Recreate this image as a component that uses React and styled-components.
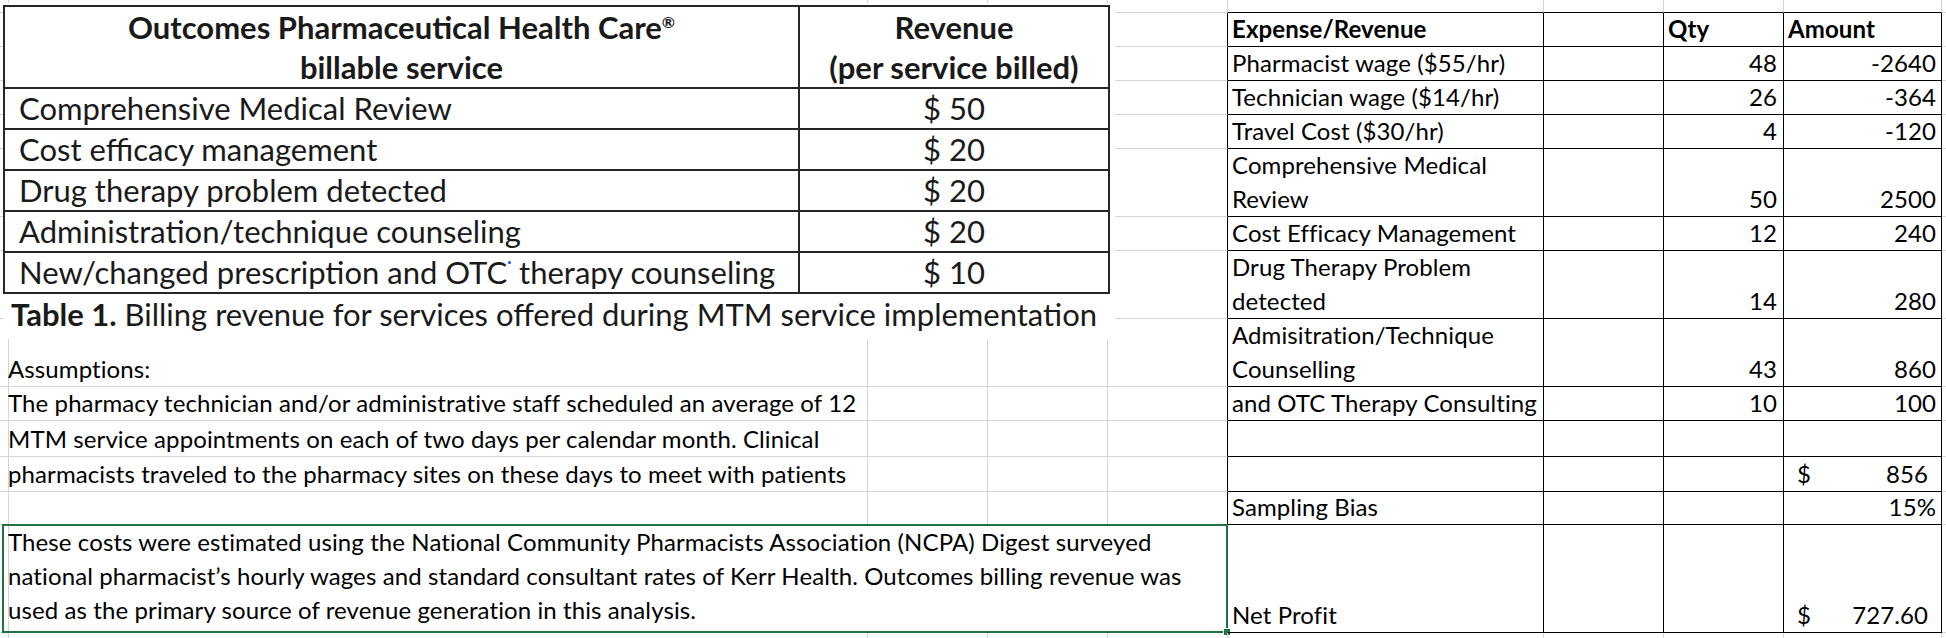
import styled, { createGlobalStyle } from 'styled-components';

const GlobalStyle = createGlobalStyle`
  html, body {
    margin: 0;
    padding: 0;
    background: #ffffff;
  }
  body {
    font-family: Lato, 'Open Sans', sans-serif;
    color: #000;
    overflow: hidden;
  }
`;

const COL_WIDTHS = [3, 865, 120, 120, 120, 316, 120, 120, 158, 4];
const ROW_HEIGHTS = [13, 34, 34, 34, 34, 68, 34, 68, 68, 34, 36, 35, 33, 108, 10];

const services = [
  { name: 'Comprehensive Medical Review', price: 50 },
  { name: 'Cost efficacy management', price: 20 },
  { name: 'Drug therapy problem detected', price: 20 },
  { name: 'Administration/technique counseling', price: 20 },
  { name: 'New/changed prescription and OTC therapy counseling', price: 10, dot: true },
];

const ledger = [
  { label: ['Expense/Revenue'], qty: 'Qty', amount: 'Amount', head: true },
  { label: ['Pharmacist wage ($55/hr)'], qty: '48', amount: '-2640' },
  { label: ['Technician wage ($14/hr)'], qty: '26', amount: '-364' },
  { label: ['Travel Cost ($30/hr)'], qty: '4', amount: '-120' },
  { label: ['Comprehensive Medical', 'Review'], qty: '50', amount: '2500' },
  { label: ['Cost Efficacy Management'], qty: '12', amount: '240' },
  { label: ['Drug Therapy Problem', 'detected'], qty: '14', amount: '280' },
  { label: ['Admisitration/Technique', 'Counselling'], qty: '43', amount: '860' },
  { label: ['and OTC Therapy Consulting'], qty: '10', amount: '100' },
  {},
  { amount: '856', currency: true },
  { label: ['Sampling Bias'], amount: '15%' },
  { label: ['Net Profit'], amount: '727.60', currency: true },
];

const leftNotes = {
  8: 'Assumptions:',
  9: 'The pharmacy technician and/or administrative staff scheduled an average of 12',
  10: 'MTM service appointments on each of two days per calendar month. Clinical',
  11: 'pharmacists traveled to the pharmacy sites on these days to meet with patients',
};

const costNote = [
  'These costs were estimated using the National Community Pharmacists Association (NCPA) Digest surveyed',
  'national pharmacist\u2019s hourly wages and standard consultant rates of Kerr Health. Outcomes billing revenue was',
  'used as the primary source of revenue generation in this analysis.',
];

export default function App() {
  function renderCells() {
    const cells = [];
    ROW_HEIGHTS.forEach((_, r) => {
      COL_WIDTHS.forEach((__, c) => {
        if (r === 13 && c >= 2 && c <= 4) return;

        const inTable = r >= 1 && r <= 13;
        const rightDark = inTable && c >= 4 && c <= 8;
        const bottomDark = r <= 13 && c >= 5 && c <= 8;
        const row = inTable ? ledger[r - 1] : null;

        let content = null;
        let align = 'left';
        let padL = 4;
        let padR = 4;

        if (c === 1 && leftNotes[r]) {
          content = <Line>{leftNotes[r]}</Line>;
          padL = 5;
        }
        if (row && c === 5 && row.label) {
          content = row.label.map((l, i) => <Line key={i}>{l}</Line>);
        }
        if (row && c === 7 && row.qty) {
          content = <Line>{row.qty}</Line>;
          if (!row.head) {
            align = 'right';
            padR = 6;
          }
        }
        if (row && c === 8 && row.amount) {
          if (row.currency) {
            content = (
              <Accounting>
                <span>$</span>
                <span>{row.amount}</span>
              </Accounting>
            );
            padL = 13;
            padR = 13;
          } else {
            content = <Line>{row.amount}</Line>;
            if (!row.head) {
              align = 'right';
              padR = 5;
            }
          }
        }

        if (r === 13 && c === 1) {
          cells.push(
            <Cell key={`${r}-${c}`} style={{ gridColumn: '2 / span 4' }} $top $padL={5} $padR={4}>
              {costNote.map((l, i) => <Line key={i}>{l}</Line>)}
              <Selection>
                <Handle />
              </Selection>
            </Cell>
          );
          return;
        }

        cells.push(
          <Cell
            key={`${r}-${c}`}
            $rightDark={rightDark}
            $bottomDark={bottomDark}
            $align={align}
            $padL={padL}
            $padR={padR}
            $bold={row && row.head}
          >
            {content}
          </Cell>
        );
      });
    });
    return cells;
  }

  return (
    <>
      <GlobalStyle />
      <Sheet>
        {renderCells()}
        <Picture>
          <PicTable>
            <PicRow $head>
              <PicHead>
                Outcomes Pharmaceutical Health Care<Reg>®</Reg>
                <br />
                billable service
              </PicHead>
              <PicHead>
                Revenue
                <br />
                (per service billed)
              </PicHead>
            </PicRow>
            {services.map((s, index) => (
              <PicRow key={index}>
                <PicCell>
                  {s.dot ? (
                    <>
                      New/changed prescription and OTC<Dot /> therapy counseling
                    </>
                  ) : (
                    s.name
                  )}
                </PicCell>
                <PicCell $center>{'$ ' + s.price}</PicCell>
              </PicRow>
            ))}
          </PicTable>
          <Caption>
            <strong>Table 1.</strong> Billing revenue for services offered during MTM service implementation
          </Caption>
        </Picture>
      </Sheet>
    </>
  );
}

const Sheet = styled.div`
  position: relative;
  display: grid;
  grid-template-columns: ${COL_WIDTHS.map((w) => w + 'px').join(' ')};
  grid-template-rows: ${ROW_HEIGHTS.map((h) => h + 'px').join(' ')};
  width: 1946px;
  height: 638px;
  overflow: hidden;
  background: #fff;
`;

const Cell = styled.div`
  position: relative;
  box-sizing: border-box;
  min-width: 0;
  display: flex;
  flex-direction: column;
  justify-content: ${(p) => (p.$top ? 'flex-start' : 'flex-end')};
  align-items: ${(p) => (p.$align === 'right' ? 'flex-end' : 'stretch')};
  padding: 0 ${(p) => p.$padR}px 0 ${(p) => p.$padL}px;
  border-right: 1px solid ${(p) => (p.$rightDark ? '#000' : '#d4d4d4')};
  border-bottom: 1px solid ${(p) => (p.$bottomDark ? '#000' : '#d4d4d4')};
  font-size: 24px;
  line-height: 34px;
  letter-spacing: 0.1px;
  font-weight: ${(p) => (p.$bold ? 700 : 400)};
  white-space: nowrap;
`;

const Line = styled.div`
  height: 34px;
`;

const Accounting = styled.div`
  display: flex;
  justify-content: space-between;
  height: 34px;
`;

const Selection = styled.div`
  position: absolute;
  left: -1px;
  top: -1px;
  right: -1px;
  bottom: -1px;
  border: 2px solid #217346;
  pointer-events: none;
`;

const Handle = styled.div`
  position: absolute;
  right: -5px;
  bottom: -5px;
  width: 6px;
  height: 6px;
  background: #217346;
  border: 1px solid #fff;
`;

const Picture = styled.div`
  position: absolute;
  left: 3px;
  top: 3px;
  width: 1112px;
  height: 336px;
  background: #fff;
  color: #1a1a1a;
  z-index: 2;
`;

const PicTable = styled.div`
  box-sizing: border-box;
  width: 1107px;
  margin: 2px 0 0 0;
  border: 2px solid #262626;
`;

const PicRow = styled.div`
  box-sizing: border-box;
  display: grid;
  grid-template-columns: 795px 1fr;
  height: ${(p) => (p.$head ? 80 : 41)}px;

  & + & {
    border-top: 2px solid #262626;
  }
`;

const PicHead = styled.div`
  font-size: 31px;
  font-weight: 700;
  line-height: 40px;
  text-align: center;

  &:first-child {
    border-right: 2px solid #262626;
  }
`;

const Reg = styled.sup`
  font-size: 16px;
  line-height: 0;
`;

const PicCell = styled.div`
  font-size: 31px;
  line-height: 39px;
  padding-left: ${(p) => (p.$center ? 0 : 14)}px;
  text-align: ${(p) => (p.$center ? 'center' : 'left')};
  white-space: nowrap;

  &:first-child {
    border-right: 2px solid #262626;
  }
`;

const Dot = styled.span`
  display: inline-block;
  width: 3px;
  height: 3px;
  border-radius: 50%;
  background: #2a3cff;
  vertical-align: 20px;
  margin-left: 1px;
`;

const Caption = styled.div`
  font-size: 31px;
  line-height: 40px;
  padding-left: 8px;
  white-space: nowrap;

  strong {
    font-weight: 700;
  }
`;
